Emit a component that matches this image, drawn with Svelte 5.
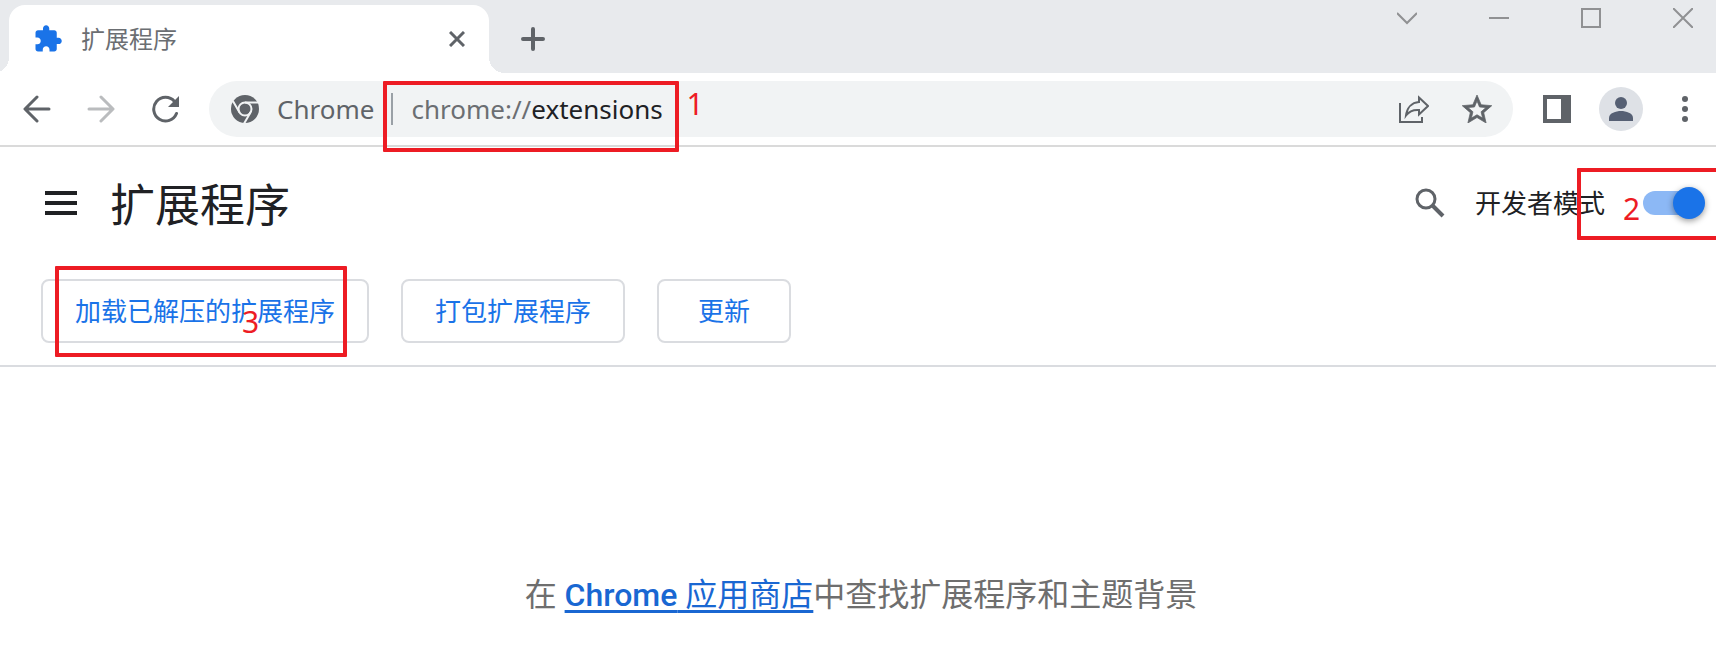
<script>
  let devMode = $state(true);
  let address = $state('chrome://extensions');
  const scheme = $derived(address.slice(0, address.indexOf('//') + 2));
  const host = $derived(address.slice(scheme.length));
</script>

<div class="browser">
  <header class="strip">
    <div class="tab">
      <svg class="favicon" width="30" height="30" viewBox="0 0 24 24" aria-hidden="true">
        <path fill="#1a73e8" d="M20.500 11H19V7c0-1.100-.900-2-2-2h-4V3.500C13 2.120 11.880 1 10.500 1S8 2.120 8 3.500V5H4c-1.100 0-1.990.900-1.990 2v3.800H3.500c1.490 0 2.700 1.210 2.700 2.700s-1.210 2.700-2.700 2.700H2V20c0 1.100.900 2 2 2h3.800v-1.500c0-1.490 1.210-2.700 2.700-2.700s2.700 1.210 2.700 2.700V22H17c1.100 0 2-.900 2-2v-4h1.500c1.380 0 2.500-1.120 2.500-2.500S21.880 11 20.500 11z" />
      </svg>
      <span class="tab-title">扩展程序</span>
      <button class="icon" aria-label="关闭标签页">
        <svg width="16" height="16" viewBox="0 0 16 16"><path d="M1 1l14 14M15 1L1 15" stroke="#5f6368" stroke-width="3" /></svg>
      </button>
    </div>
    <button class="icon new-tab" aria-label="新标签页">
      <svg width="24" height="24" viewBox="0 0 24 24"><path d="M12 2v20M2 12h20" stroke="#5f6368" stroke-width="4" stroke-linecap="round" /></svg>
    </button>
    <div class="window-controls">
      <button class="icon" aria-label="搜索标签页">
        <svg width="20" height="20" viewBox="0 0 20 20"><path d="M0 5l10 10L20 5" /></svg>
      </button>
      <button class="icon" aria-label="最小化">
        <svg width="20" height="20" viewBox="0 0 20 20"><path d="M0 10h20" /></svg>
      </button>
      <button class="icon" aria-label="最大化">
        <svg width="20" height="20" viewBox="0 0 20 20"><path d="M1 1h18v18H1z" /></svg>
      </button>
      <button class="icon" aria-label="关闭">
        <svg width="20" height="20" viewBox="0 0 20 20"><path d="M0 0l20 20M20 0L0 20" /></svg>
      </button>
    </div>
  </header>

  <nav class="toolbar">
    <div class="nav-buttons">
      <button class="icon" aria-label="后退">
        <svg width="28" height="28" viewBox="0 0 28 28"><path d="M26 14H3M14 2L2 14l12 12" stroke="#5f6368" stroke-width="3" stroke-linecap="round" stroke-linejoin="round" fill="none" /></svg>
      </button>
      <button class="icon" aria-label="前进" disabled>
        <svg width="28" height="28" viewBox="0 0 28 28"><path d="M2 14h23M14 2l12 12-12 12" stroke="#babcbe" stroke-width="3" stroke-linecap="round" stroke-linejoin="round" fill="none" /></svg>
      </button>
      <button class="icon" aria-label="重新加载">
        <svg width="28" height="28" viewBox="0 0 28 28"><path d="M25.500 18.500A11.800 11.800 0 1 1 23.500 6.500" stroke="#5f6368" stroke-width="3" stroke-linecap="round" fill="none" /><path d="M28 1v11H17z" fill="#5f6368" /></svg>
      </button>
    </div>
    <div class="omnibox">
      <svg width="28" height="28" viewBox="0 0 28 28" aria-hidden="true">
        <circle cx="14" cy="14" r="14" fill="#5f6368" />
        <circle cx="14" cy="14" r="6.500" fill="#5f6368" stroke="#f1f3f4" stroke-width="2" />
        <path d="M14 7.500h13M8.400 17.250L1.900 6M19.600 17.250L13.100 28.500" stroke="#f1f3f4" stroke-width="2" />
      </svg>
      <span class="origin">Chrome</span>
      <span class="divider"></span>
      <div class="address">
        <input aria-label="地址栏" spellcheck="false" bind:value={address} />
        <span class="address-text" aria-hidden="true">{scheme}<b>{host}</b></span>
        <div class="mark mark-address"><span>1</span></div>
      </div>
      <button class="icon" aria-label="分享">
        <svg width="30" height="28" viewBox="0 0 30 28"><path d="M1 8v19h22v-5" fill="none" stroke="#5f6368" stroke-width="2" /><path d="M20 2.500L29 11l-9 8.500V15c-6-.5-10 1.500-13 5.500C8 13 12.500 7.500 20 7z" fill="none" stroke="#5f6368" stroke-width="2" /></svg>
      </button>
      <button class="icon" aria-label="添加书签">
        <svg width="30" height="28" viewBox="2 2 20 19"><path fill="#5f6368" stroke="#5f6368" stroke-width=".5" d="M22 9.240l-7.190-.620L12 2 9.190 8.630 2 9.240l5.460 4.730L5.820 21 12 17.270 18.180 21l-1.630-7.030L22 9.240zM12 15.400l-3.760 2.270 1-4.280-3.320-2.880 4.380-.380L12 6.100l1.710 4.040 4.380.380-3.320 2.880 1 4.280L12 15.400z" /></svg>
      </button>
    </div>
    <button class="icon side" aria-label="侧边栏">
      <svg width="28" height="28" viewBox="0 0 28 28"><path fill="#5f6368" fill-rule="evenodd" d="M0 0h28v28H0zM4 4v20h14V4z" /></svg>
    </button>
    <button class="icon avatar" aria-label="用户">
      <svg width="44" height="44" viewBox="0 0 44 44"><circle cx="22" cy="22" r="22" fill="#dee1e6" /><circle cx="22" cy="16" r="6" fill="#566074" /><path d="M10 34v-3c0-5 7-7 12-7s12 2 12 7v3z" fill="#566074" /></svg>
    </button>
    <button class="icon" aria-label="菜单">
      <svg width="6" height="28" viewBox="0 0 6 28"><g fill="#5f6368"><circle cx="3" cy="4" r="3" /><circle cx="3" cy="14" r="3" /><circle cx="3" cy="24" r="3" /></g></svg>
    </button>
  </nav>

  <section class="page-head">
    <div class="title-row">
      <button class="icon" aria-label="主菜单">
        <svg width="32" height="24" viewBox="0 0 32 24"><path d="M0 2h32M0 12h32M0 22h32" stroke="#202124" stroke-width="4" /></svg>
      </button>
      <h1>扩展程序</h1>
      <button class="icon" aria-label="搜索">
        <svg width="30" height="30" viewBox="0 0 30 30"><circle cx="11" cy="11" r="9" fill="none" stroke="#5f6368" stroke-width="3" /><path d="M17 17l11 11" stroke="#5f6368" stroke-width="4" /></svg>
      </button>
      <label class="dev" for="dev-mode">开发者模式</label>
      <div class="toggle">
        <input id="dev-mode" type="checkbox" role="switch" bind:checked={devMode} />
        <div class="mark mark-toggle"><span>2</span></div>
      </div>
    </div>
    <div class="actions">
      <div class="action">
        <button>加载已解压的扩展程序</button>
        <div class="mark mark-load"><span>3</span></div>
      </div>
      <button>打包扩展程序</button>
      <button>更新</button>
    </div>
  </section>

  <main>
    <p>在 <a href="#store"><span>Chrome</span> 应用商店</a>中查找扩展程序和主题背景</p>
  </main>
</div>

<style>
  :global(body) { background: #fff; }
  * { box-sizing: border-box; }
  .browser {
    display: flex;
    flex-direction: column;
    min-height: 100vh;
    overflow: hidden;
    font-family: "Noto Sans", "Noto Sans CJK SC", sans-serif;
    color: #202124;
  }
  svg { display: block; flex: none; }
  .icon { display: block; flex: none; padding: 0; border: 0; background: none; }

  .strip { display: flex; align-items: flex-start; height: 73px; padding-left: 9px; background: #e8eaed; }
  .tab {
    position: relative;
    display: flex;
    align-items: center;
    width: 480px;
    height: 68px;
    margin-top: 5px;
    padding: 0 24px;
    border-radius: 16px 16px 0 0;
    background: #fff;
  }
  .tab::before, .tab::after { content: ""; position: absolute; bottom: 0; width: 16px; height: 16px; }
  .tab::before { right: 100%; background: radial-gradient(circle at 0 0, transparent 16px, #fff 16px); }
  .tab::after { left: 100%; background: radial-gradient(circle at 100% 0, transparent 16px, #fff 16px); }
  .tab-title {
    flex: 1;
    margin-left: 18px;
    padding-bottom: 2px;
    font: 24px/32px "Noto Sans CJK SC", sans-serif;
    color: #6b6e72;
  }
  .new-tab { margin: 27px 0 0 32px; }
  .window-controls { display: flex; gap: 72px; margin-left: auto; padding: 8px 23px 0 0; }
  .window-controls path { fill: none; stroke: #909193; stroke-width: 2; }

  .toolbar { display: flex; align-items: center; height: 74px; padding: 0 28px 0 23px; border-bottom: 2px solid #dadada; }
  .nav-buttons { display: flex; gap: 36px; margin-right: 30px; }
  .omnibox {
    display: flex;
    flex: 1;
    align-items: center;
    height: 56px;
    padding: 0 21px 0 22px;
    border-radius: 28px;
    background: #f1f3f4;
    font-size: 26px;
    line-height: 36px;
  }
  .origin { margin-left: 18px; color: #5f6368; }
  .divider { width: 2px; height: 32px; margin: 0 18px 0 17px; background: #9aa0a6; }
  .address { position: relative; display: grid; flex: 1; }
  .address > input, .address-text { grid-area: 1 / 1; font: inherit; }
  .address > input { width: 100%; padding: 0; border: 0; outline: 0; background: none; color: transparent; caret-color: #202124; }
  .address-text { pointer-events: none; color: #6b6e72; }
  .address-text b { font-weight: 400; color: #202124; }
  .omnibox > .icon { margin-left: 33px; }
  .side { margin-left: 30px; }
  .avatar { margin: 0 39px 0 28px; }

  .page-head { padding: 20px 11px 22px 41px; border-bottom: 2px solid #dadce0; }
  .title-row { display: flex; align-items: center; height: 72px; padding-left: 4px; }
  h1 { flex: 1; margin: 0 0 0 33px; font: 400 45px/64px "Noto Sans CJK SC", sans-serif; }
  .dev { margin: 0 38px 0 30px; padding-bottom: 2px; font: 26px/36px "Noto Sans CJK SC", sans-serif; }
  .toggle { position: relative; }
  .toggle input {
    position: relative;
    display: flex;
    align-items: center;
    appearance: none;
    width: 62px;
    height: 32px;
    margin: 0;
  }
  .toggle input::before { content: ""; width: 58px; height: 24px; border-radius: 12px; background: #bdc1c6; }
  .toggle input::after {
    content: "";
    position: absolute;
    left: 0;
    width: 32px;
    height: 32px;
    border-radius: 50%;
    background: #fff;
    box-shadow: 0 2px 6px rgb(0 0 0 / 40%);
  }
  .toggle input:checked::before { background: #8cb8f5; }
  .toggle input:checked::after { left: auto; right: 0; background: #1a73e8; }

  .actions { display: flex; gap: 32px; margin-top: 40px; }
  .action { position: relative; }
  .actions button {
    min-width: 134px;
    height: 64px;
    padding: 0 32px 2px;
    border: 2px solid #dadce0;
    border-radius: 8px;
    background: #fff;
    font: 26px/36px "Noto Sans CJK SC", sans-serif;
    color: #1a73e8;
  }

  main { display: flex; flex: 1; align-items: flex-end; justify-content: center; padding: 0 0 41px 6px; }
  p { margin: 0; font: 32px/48px Roboto, "Noto Sans CJK SC", sans-serif; color: #6e6e6e; }
  a { color: #1967d2; text-decoration-thickness: 3px; text-underline-offset: 4px; text-decoration-skip-ink: none; }
  a span { font-weight: 500; }

  .mark { position: absolute; border: 4px solid #ed1c24; border-radius: 1px; pointer-events: none; font-size: 30px; line-height: 40px; color: #ed1c24; }
  .mark span { position: absolute; }
  .mark-address { left: -28px; top: -10px; width: 296px; height: 71px; }
  .mark-address span { left: 299px; top: -1px; }
  .mark-toggle { left: -66px; top: -19px; width: 148px; height: 72px; }
  .mark-toggle span { left: 42px; top: 17px; }
  .mark-load { left: 14px; top: -13px; width: 292px; height: 91px; }
  .mark-load span { left: 183px; top: 32px; }
</style>
